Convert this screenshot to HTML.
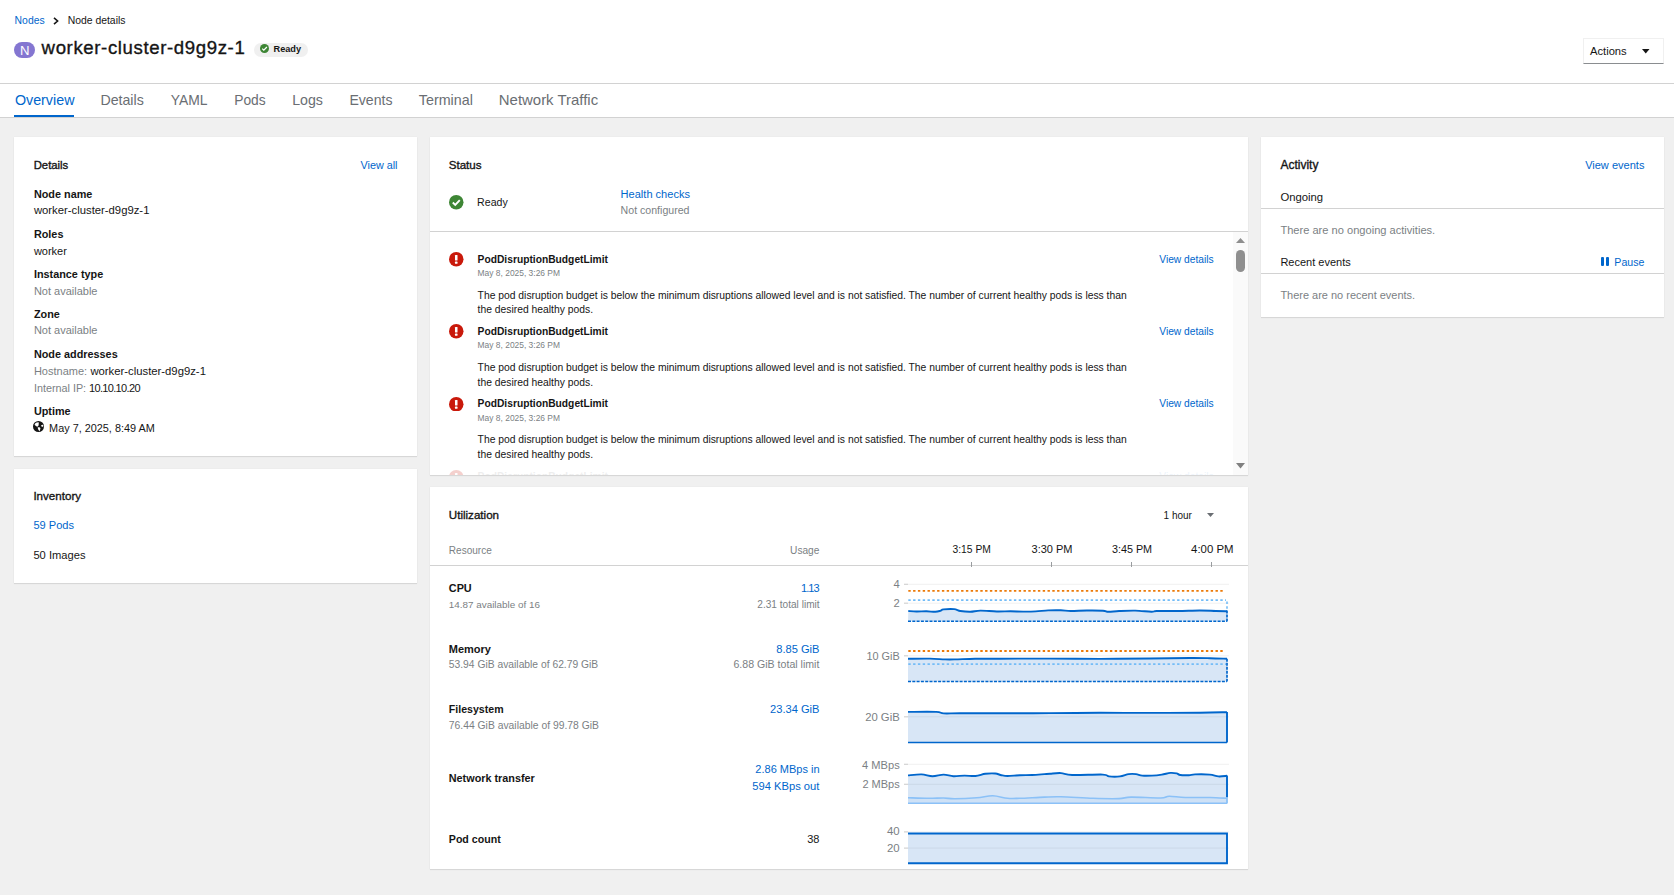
<!DOCTYPE html>
<html><head><meta charset="utf-8"><style>
html,body{margin:0;padding:0;width:1674px;height:895px;overflow:hidden;background:#fff;position:relative;font-family:"Liberation Sans",sans-serif;color:#151515}
.t{position:absolute;white-space:nowrap;line-height:1}
</style></head><body>
<div style="position:absolute;left:0px;top:0px;width:1674px;height:83px;background:#fff"></div>
<div style="position:absolute;left:0px;top:83px;width:1674px;height:1px;background:#d2d2d2"></div>
<div style="position:absolute;left:0px;top:84px;width:1674px;height:33px;background:#fff"></div>
<div style="position:absolute;left:0px;top:117px;width:1674px;height:1px;background:#d2d2d2"></div>
<div style="position:absolute;left:0px;top:118px;width:1674px;height:777px;background:#f0f0f0"></div>
<div class="t" style="top:16.40px;font-size:10.4px;color:#0066cc;left:14.6px;">Nodes</div>
<svg style="position:absolute;left:53px;top:17px" width="6" height="8" viewBox="0 0 6 8"><path d="M1 0.8 L4.6 4 L1 7.2" fill="none" stroke="#151515" stroke-width="1.6"/></svg>
<div class="t" style="top:16.40px;font-size:10.4px;left:67.7px;">Node details</div>
<div style="position:absolute;left:14px;top:42px;width:21px;height:16px;background:#8476d1;border-radius:8px"></div>
<div class="t" style="top:44.87px;font-size:12.2px;color:#fff;left:20.0px;transform:scaleX(1.08);transform-origin:left">N</div>
<div class="t" style="top:39.16px;font-size:18.6px;left:41.6px;-webkit-text-stroke:0.35px #151515;letter-spacing:0.62px">worker-cluster-d9g9z-1</div>
<div style="position:absolute;left:254px;top:43px;width:54px;height:14px;background:#f0f0f0;border-radius:7px"></div>
<svg style="position:absolute;left:260px;top:44px" width="9" height="9" viewBox="0 0 9 9"><circle cx="4.5" cy="4.5" r="4.5" fill="#3e8635"/><path d="M2.2 4.6 L3.8 6.1 L6.9 3" fill="none" stroke="#fff" stroke-width="1.3"/></svg>
<div class="t" style="top:44.91px;font-size:9.2px;font-weight:700;left:273.5px;">Ready</div>
<div style="position:absolute;left:1583px;top:38px;width:81px;height:26px;background:#fff;border:1px solid #f0f0f0;border-bottom:1px solid #8a8d90;box-sizing:border-box"></div>
<div class="t" style="top:46.32px;font-size:11.2px;left:1590px;">Actions</div>
<svg style="position:absolute;left:1642px;top:49.3px" width="8" height="5" viewBox="0 0 8 5"><path d="M0 0 L7.5 0 L3.75 4.5 Z" fill="#151515"/></svg>
<div class="t" style="top:92.80px;font-size:14.3px;color:#0066cc;left:14.9px;">Overview</div>
<div class="t" style="top:92.88px;font-size:14.2px;color:#6a6e73;left:100.4px;">Details</div>
<div class="t" style="top:93.93px;font-size:13.9px;color:#6a6e73;left:170.7px;">YAML</div>
<div class="t" style="top:94.02px;font-size:13.8px;color:#6a6e73;left:234.2px;">Pods</div>
<div class="t" style="top:92.88px;font-size:14.2px;color:#6a6e73;left:292.2px;">Logs</div>
<div class="t" style="top:92.96px;font-size:14.1px;color:#6a6e73;left:349.4px;">Events</div>
<div class="t" style="top:92.80px;font-size:14.3px;color:#6a6e73;left:418.8px;">Terminal</div>
<div class="t" style="top:93.04px;font-size:14.95px;color:#6a6e73;left:498.8px;">Network Traffic</div>
<div style="position:absolute;left:14px;top:115px;width:60px;height:2px;background:#0066cc"></div>
<div style="position:absolute;left:14px;top:137px;width:403px;height:319px;background:#fff;box-shadow:0 1px 1px 0 rgba(3,3,3,0.09),0 0 1px 0 rgba(3,3,3,0.07)"></div>
<div style="position:absolute;left:14px;top:469px;width:403px;height:114px;background:#fff;box-shadow:0 1px 1px 0 rgba(3,3,3,0.09),0 0 1px 0 rgba(3,3,3,0.07)"></div>
<div style="position:absolute;left:430px;top:137px;width:818px;height:338px;background:#fff;box-shadow:0 1px 1px 0 rgba(3,3,3,0.09),0 0 1px 0 rgba(3,3,3,0.07)"></div>
<div style="position:absolute;left:430px;top:487px;width:818px;height:382px;background:#fff;box-shadow:0 1px 1px 0 rgba(3,3,3,0.09),0 0 1px 0 rgba(3,3,3,0.07)"></div>
<div style="position:absolute;left:1261px;top:137px;width:403px;height:180px;background:#fff;box-shadow:0 1px 1px 0 rgba(3,3,3,0.09),0 0 1px 0 rgba(3,3,3,0.07)"></div>
<div class="t" style="top:160.13px;font-size:11.3px;left:33.7px;-webkit-text-stroke:0.35px #151515">Details</div>
<div class="t" style="top:160.36px;font-size:10.8px;color:#0066cc;right:1276.50px;text-align:right;">View all</div>
<div class="t" style="top:188.82px;font-size:10.85px;font-weight:700;left:33.9px;">Node name</div>
<div class="t" style="top:205.33px;font-size:11.3px;left:33.9px;">worker-cluster-d9g9z-1</div>
<div class="t" style="top:228.82px;font-size:10.85px;font-weight:700;left:33.9px;">Roles</div>
<div class="t" style="top:245.59px;font-size:11.0px;left:33.9px;">worker</div>
<div class="t" style="top:268.92px;font-size:10.85px;font-weight:700;left:33.9px;">Instance type</div>
<div class="t" style="top:285.69px;font-size:11.0px;color:#7b7f84;left:33.9px;">Not available</div>
<div class="t" style="top:308.72px;font-size:10.85px;font-weight:700;left:33.9px;">Zone</div>
<div class="t" style="top:325.49px;font-size:11.0px;color:#7b7f84;left:33.9px;">Not available</div>
<div class="t" style="top:349.02px;font-size:10.85px;font-weight:700;left:33.9px;">Node addresses</div>
<div class="t" style="top:365.79px;font-size:11.0px;color:#7b7f84;left:33.9px;">Hostname:</div>
<div class="t" style="top:365.53px;font-size:11.3px;left:90.4px;">worker-cluster-d9g9z-1</div>
<div class="t" style="top:382.76px;font-size:10.8px;color:#7b7f84;left:33.9px;">Internal IP:</div>
<div class="t" style="top:382.59px;font-size:11.0px;left:89.0px;letter-spacing:-0.66px">10.10.10.20</div>
<div class="t" style="top:405.72px;font-size:10.85px;font-weight:700;left:33.9px;">Uptime</div>
<svg style="position:absolute;left:33.1px;top:421px" width="11" height="11" viewBox="0 0 16 16"><circle cx="8" cy="8" r="8" fill="#151515"/><path d="M2.3 5.6 C2.8 3.8 4 2.7 5.5 2.2 L8.3 1.7 C8.5 3.5 8.3 5.2 8.1 6.6 C7.4 7.4 6.8 8 6.1 8.2 C5.2 7.8 4.4 7.6 3.9 7 C3.2 6.6 2.6 6.2 2.3 5.6 Z" fill="#fff"/><path d="M6.8 9.3 C7.9 9.1 9.2 9.2 10.1 9.5 C10.9 10.2 10.9 11.2 10.4 12.2 C10.1 13.1 9.9 14 9.6 14.8 C8.9 14.3 8.3 13.5 7.8 12.7 C7.4 11.6 7 10.5 6.8 9.3 Z" fill="#fff"/><path d="M11.8 6.3 C12.6 5.7 13.8 5.4 14.7 5.6 C15 6.6 15 7.6 14.8 8.4 C13.9 8.5 13 8.3 12.4 8 C12 7.5 11.8 6.9 11.8 6.3 Z" fill="#fff"/></svg>
<div class="t" style="top:422.80px;font-size:10.87px;left:49.1px;">May 7, 2025, 8:49 AM</div>
<div class="t" style="top:490.48px;font-size:11.6px;left:33.4px;-webkit-text-stroke:0.35px #151515">Inventory</div>
<div class="t" style="top:520.23px;font-size:11.07px;color:#0066cc;left:33.4px;">59 Pods</div>
<div class="t" style="top:550.25px;font-size:11.16px;left:33.4px;">50 Images</div>
<div class="t" style="top:158.74px;font-size:12.0px;left:1280.4px;-webkit-text-stroke:0.35px #151515">Activity</div>
<div class="t" style="top:159.95px;font-size:11.04px;color:#0066cc;right:29.60px;text-align:right;">View events</div>
<div class="t" style="top:191.83px;font-size:11.3px;left:1280.4px;">Ongoing</div>
<div style="position:absolute;left:1261px;top:208px;width:403px;height:1px;background:#d2d2d2"></div>
<div class="t" style="top:225.00px;font-size:11.1px;color:#7b7f84;left:1280.4px;">There are no ongoing activities.</div>
<div class="t" style="top:257.49px;font-size:11.0px;left:1280.4px;">Recent events</div>
<div style="position:absolute;left:1600.8px;top:256.8px;width:3.6px;height:9.2px;background:#0066cc;border-radius:1px"></div>
<div style="position:absolute;left:1605.9px;top:256.8px;width:3.6px;height:9.2px;background:#0066cc;border-radius:1px"></div>
<div class="t" style="top:257.03px;font-size:10.6px;color:#0066cc;right:29.60px;text-align:right;">Pause</div>
<div style="position:absolute;left:1261px;top:273px;width:403px;height:1px;background:#d2d2d2"></div>
<div class="t" style="top:289.91px;font-size:10.97px;color:#7b7f84;left:1280.4px;">There are no recent events.</div>
<div class="t" style="top:158.88px;font-size:11.6px;left:448.7px;-webkit-text-stroke:0.35px #151515">Status</div>
<svg style="position:absolute;left:449.2px;top:195px" width="14.5" height="14.5" viewBox="0 0 16 16"><circle cx="8" cy="8" r="8" fill="#3e8635"/><path d="M4.2 8.3 L6.9 10.9 L11.9 5.6" fill="none" stroke="#fff" stroke-width="2.1"/></svg>
<div class="t" style="top:197.03px;font-size:10.6px;left:477.1px;">Ready</div>
<div class="t" style="top:188.65px;font-size:11.05px;color:#0066cc;left:620.6px;">Health checks</div>
<div class="t" style="top:204.93px;font-size:10.6px;color:#7b7f84;left:620.6px;">Not configured</div>
<div style="position:absolute;left:430px;top:231px;width:818px;height:1px;background:#d2d2d2"></div>
<svg style="position:absolute;left:449.2px;top:252.00px;opacity:1" width="14.5" height="14.5" viewBox="0 0 16 16"><circle cx="8" cy="8" r="8" fill="#c9190b"/><rect x="6.6" y="3.3" width="2.8" height="6" rx="0.6" fill="#fff"/><rect x="6.6" y="10.6" width="2.8" height="2.4" rx="0.6" fill="#fff"/></svg>
<div class="t" style="top:254.71px;font-size:10.26px;font-weight:700;left:477.6px;">PodDisruptionBudgetLimit</div>
<div class="t" style="top:268.86px;font-size:8.43px;color:#7b7f84;left:477.6px;">May 8, 2025, 3:26 PM</div>
<div class="t" style="top:290.75px;font-size:10.34px;left:477.6px;">The pod disruption budget is below the minimum disruptions allowed level and is not satisfied. The number of current healthy pods is less than</div>
<div class="t" style="top:305.45px;font-size:10.34px;left:477.6px;">the desired healthy pods.</div>
<div class="t" style="top:254.64px;font-size:10.23px;color:#0066cc;right:460.40px;text-align:right;">View details</div>
<svg style="position:absolute;left:449.2px;top:324.35px;opacity:1" width="14.5" height="14.5" viewBox="0 0 16 16"><circle cx="8" cy="8" r="8" fill="#c9190b"/><rect x="6.6" y="3.3" width="2.8" height="6" rx="0.6" fill="#fff"/><rect x="6.6" y="10.6" width="2.8" height="2.4" rx="0.6" fill="#fff"/></svg>
<div class="t" style="top:327.06px;font-size:10.26px;font-weight:700;left:477.6px;">PodDisruptionBudgetLimit</div>
<div class="t" style="top:341.21px;font-size:8.43px;color:#7b7f84;left:477.6px;">May 8, 2025, 3:26 PM</div>
<div class="t" style="top:363.10px;font-size:10.34px;left:477.6px;">The pod disruption budget is below the minimum disruptions allowed level and is not satisfied. The number of current healthy pods is less than</div>
<div class="t" style="top:377.80px;font-size:10.34px;left:477.6px;">the desired healthy pods.</div>
<div class="t" style="top:326.99px;font-size:10.23px;color:#0066cc;right:460.40px;text-align:right;">View details</div>
<svg style="position:absolute;left:449.2px;top:396.70px;opacity:1" width="14.5" height="14.5" viewBox="0 0 16 16"><circle cx="8" cy="8" r="8" fill="#c9190b"/><rect x="6.6" y="3.3" width="2.8" height="6" rx="0.6" fill="#fff"/><rect x="6.6" y="10.6" width="2.8" height="2.4" rx="0.6" fill="#fff"/></svg>
<div class="t" style="top:399.41px;font-size:10.26px;font-weight:700;left:477.6px;">PodDisruptionBudgetLimit</div>
<div class="t" style="top:413.56px;font-size:8.43px;color:#7b7f84;left:477.6px;">May 8, 2025, 3:26 PM</div>
<div class="t" style="top:435.45px;font-size:10.34px;left:477.6px;">The pod disruption budget is below the minimum disruptions allowed level and is not satisfied. The number of current healthy pods is less than</div>
<div class="t" style="top:450.15px;font-size:10.34px;left:477.6px;">the desired healthy pods.</div>
<div class="t" style="top:399.34px;font-size:10.23px;color:#0066cc;right:460.40px;text-align:right;">View details</div>
<div style="position:absolute;left:430px;top:468px;width:802px;height:7px;overflow:hidden"><svg style="position:absolute;left:19.2px;top:2px;opacity:0.2" width="14.5" height="14.5" viewBox="0 0 16 16"><circle cx="8" cy="8" r="8" fill="#c9190b"/><rect x="6.6" y="3.3" width="2.8" height="6" rx="0.6" fill="#fff"/><rect x="6.6" y="10.6" width="2.8" height="2.4" rx="0.6" fill="#fff"/></svg><div class="t" style="left:47.6px;top:3.76px;font-size:10.26px;font-weight:700;opacity:0.07">PodDisruptionBudgetLimit</div><div class="t" style="right:18.4px;top:3.69px;font-size:10.23px;color:#0066cc;opacity:0.07">View details</div></div>
<div style="position:absolute;left:1233px;top:232px;width:15px;height:243px;background:#fafafa"></div>
<svg style="position:absolute;left:1236px;top:237.5px" width="9" height="6" viewBox="0 0 9 6"><path d="M0 5 L9 5 L4.5 0 Z" fill="#8e8e8e"/></svg>
<div style="position:absolute;left:1236px;top:250px;width:9px;height:22px;background:#8f8f8f;border-radius:4.5px"></div>
<svg style="position:absolute;left:1236px;top:462.5px" width="9" height="6" viewBox="0 0 9 6"><path d="M0 0 L9 0 L4.5 5.5 Z" fill="#808080"/></svg>
<div class="t" style="top:508.68px;font-size:11.6px;left:448.8px;-webkit-text-stroke:0.35px #151515">Utilization</div>
<div class="t" style="top:510.74px;font-size:10.0px;left:1163.6px;">1 hour</div>
<svg style="position:absolute;left:1206.5px;top:513px" width="8" height="5" viewBox="0 0 8 5"><path d="M0 0 L7 0 L3.5 4 Z" fill="#6a6e73"/></svg>
<div class="t" style="top:545.99px;font-size:10.05px;color:#7b7f84;left:448.8px;">Resource</div>
<div class="t" style="top:545.89px;font-size:10.17px;color:#7b7f84;right:854.60px;text-align:right;">Usage</div>
<div style="position:absolute;left:430px;top:565px;width:818px;height:1px;background:#d2d2d2"></div>
<div class="t" style="top:545.28px;font-size:10.3px;left:821.70px;width:300px;text-align:center;">3:15 PM</div>
<div class="t" style="top:544.19px;font-size:11.0px;left:902.00px;width:300px;text-align:center;">3:30 PM</div>
<div class="t" style="top:544.36px;font-size:10.8px;left:982.00px;width:300px;text-align:center;">3:45 PM</div>
<div class="t" style="top:544.35px;font-size:11.4px;left:1062.30px;width:300px;text-align:center;">4:00 PM</div>
<div style="position:absolute;left:971px;top:562px;width:1px;height:5px;background:#9a9da0"></div>
<div style="position:absolute;left:1051px;top:562px;width:1px;height:5px;background:#9a9da0"></div>
<div style="position:absolute;left:1131px;top:562px;width:1px;height:5px;background:#9a9da0"></div>
<div style="position:absolute;left:1211px;top:562px;width:1px;height:5px;background:#9a9da0"></div>
<div class="t" style="top:582.92px;font-size:10.85px;font-weight:700;left:448.8px;">CPU</div>
<div class="t" style="top:582.79px;font-size:11.0px;color:#0066cc;right:855.20px;text-align:right;letter-spacing:-0.9px">1.13</div>
<div class="t" style="top:599.62px;font-size:9.9px;color:#7b7f84;left:448.8px;">14.87 available of 16</div>
<div class="t" style="top:600.45px;font-size:10.1px;color:#7b7f84;right:854.40px;text-align:right;">2.31 total limit</div>
<div class="t" style="top:643.79px;font-size:11.0px;font-weight:700;left:448.8px;">Memory</div>
<div class="t" style="top:643.70px;font-size:11.1px;color:#0066cc;right:854.60px;text-align:right;">8.85 GiB</div>
<div class="t" style="top:659.88px;font-size:10.3px;color:#7b7f84;left:448.8px;">53.94 GiB available of 62.79 GiB</div>
<div class="t" style="top:658.83px;font-size:10.6px;color:#7b7f84;right:854.60px;text-align:right;">6.88 GiB total limit</div>
<div class="t" style="top:704.13px;font-size:10.6px;font-weight:700;left:448.8px;">Filesystem</div>
<div class="t" style="top:703.70px;font-size:11.1px;color:#0066cc;right:854.60px;text-align:right;">23.34 GiB</div>
<div class="t" style="top:720.64px;font-size:10.35px;color:#7b7f84;left:448.8px;">76.44 GiB available of 99.78 GiB</div>
<div class="t" style="top:772.94px;font-size:10.82px;font-weight:700;left:448.8px;">Network transfer</div>
<div class="t" style="top:763.96px;font-size:11.03px;color:#0066cc;right:854.40px;text-align:right;">2.86 MBps in</div>
<div class="t" style="top:780.92px;font-size:11.2px;color:#0066cc;right:854.60px;text-align:right;">594 KBps out</div>
<div class="t" style="top:833.99px;font-size:10.64px;font-weight:700;left:448.8px;">Pod count</div>
<div class="t" style="top:833.69px;font-size:11.0px;right:854.60px;text-align:right;">38</div>
<div class="t" style="top:578.62px;font-size:11.2px;color:#7b7f84;right:774.30px;text-align:right;">4</div>
<div class="t" style="top:597.72px;font-size:11.2px;color:#7b7f84;right:774.30px;text-align:right;">2</div>
<div class="t" style="top:650.67px;font-size:10.9px;color:#7b7f84;right:774.30px;text-align:right;">10 GiB</div>
<div class="t" style="top:711.73px;font-size:11.3px;color:#7b7f84;right:774.30px;text-align:right;">20 GiB</div>
<div class="t" style="top:759.60px;font-size:11.1px;color:#7b7f84;right:774.30px;text-align:right;">4 MBps</div>
<div class="t" style="top:778.79px;font-size:11.0px;color:#7b7f84;right:774.30px;text-align:right;">2 MBps</div>
<div class="t" style="top:826.45px;font-size:11.4px;color:#7b7f84;right:774.30px;text-align:right;">40</div>
<div class="t" style="top:842.55px;font-size:11.4px;color:#7b7f84;right:774.30px;text-align:right;">20</div>
<svg style="position:absolute;left:0;top:0" width="1674" height="895" viewBox="0 0 1674 895">
<path d="M908.30 611.00 C909.67 611.08 913.47 611.45 916.50 611.50 C919.53 611.55 923.37 611.25 926.50 611.30 C929.63 611.35 933.00 611.88 935.30 611.80 C937.60 611.72 938.93 611.20 940.30 610.80 C941.67 610.40 941.20 609.68 943.50 609.40 C945.80 609.12 951.28 608.83 954.10 609.10 C956.92 609.37 957.68 610.55 960.40 611.00 C963.12 611.45 967.05 611.87 970.40 611.80 C973.75 611.73 976.10 610.65 980.50 610.60 C984.90 610.55 991.78 611.38 996.80 611.50 C1001.82 611.62 1006.22 611.28 1010.60 611.30 C1014.98 611.32 1018.92 611.58 1023.10 611.60 C1027.28 611.62 1031.52 611.60 1035.70 611.40 C1039.88 611.20 1044.02 610.58 1048.20 610.40 C1052.38 610.22 1057.03 610.20 1060.80 610.30 C1064.57 610.40 1066.45 610.97 1070.80 611.00 C1075.15 611.03 1081.53 610.55 1086.90 610.50 C1092.27 610.45 1099.42 610.48 1103.00 610.70 C1106.58 610.92 1105.72 611.75 1108.40 611.80 C1111.08 611.85 1114.62 611.20 1119.10 611.00 C1123.58 610.80 1129.92 610.47 1135.30 610.60 C1140.68 610.73 1147.82 611.73 1151.40 611.80 C1154.98 611.87 1152.32 611.13 1156.80 611.00 C1161.28 610.87 1171.13 611.08 1178.30 611.00 C1185.47 610.92 1193.53 610.50 1199.80 610.50 C1206.07 610.50 1211.37 610.88 1215.90 611.00 C1220.43 611.12 1225.15 611.17 1227.00 611.20 L1227 621.3 L908 621.3 Z" fill="#d8e6f6"/>
<line x1="908" y1="584.3" x2="1229" y2="584.3" stroke="#000" stroke-opacity="0.06" stroke-width="1"/>
<line x1="904" y1="584.3" x2="908" y2="584.3" stroke="#d2d2d2" stroke-width="1.2"/>
<line x1="908" y1="603.2" x2="1229" y2="603.2" stroke="#000" stroke-opacity="0.06" stroke-width="1"/>
<line x1="904" y1="603.2" x2="908" y2="603.2" stroke="#d2d2d2" stroke-width="1.2"/>
<path d="M908.30 611.00 C909.67 611.08 913.47 611.45 916.50 611.50 C919.53 611.55 923.37 611.25 926.50 611.30 C929.63 611.35 933.00 611.88 935.30 611.80 C937.60 611.72 938.93 611.20 940.30 610.80 C941.67 610.40 941.20 609.68 943.50 609.40 C945.80 609.12 951.28 608.83 954.10 609.10 C956.92 609.37 957.68 610.55 960.40 611.00 C963.12 611.45 967.05 611.87 970.40 611.80 C973.75 611.73 976.10 610.65 980.50 610.60 C984.90 610.55 991.78 611.38 996.80 611.50 C1001.82 611.62 1006.22 611.28 1010.60 611.30 C1014.98 611.32 1018.92 611.58 1023.10 611.60 C1027.28 611.62 1031.52 611.60 1035.70 611.40 C1039.88 611.20 1044.02 610.58 1048.20 610.40 C1052.38 610.22 1057.03 610.20 1060.80 610.30 C1064.57 610.40 1066.45 610.97 1070.80 611.00 C1075.15 611.03 1081.53 610.55 1086.90 610.50 C1092.27 610.45 1099.42 610.48 1103.00 610.70 C1106.58 610.92 1105.72 611.75 1108.40 611.80 C1111.08 611.85 1114.62 611.20 1119.10 611.00 C1123.58 610.80 1129.92 610.47 1135.30 610.60 C1140.68 610.73 1147.82 611.73 1151.40 611.80 C1154.98 611.87 1152.32 611.13 1156.80 611.00 C1161.28 610.87 1171.13 611.08 1178.30 611.00 C1185.47 610.92 1193.53 610.50 1199.80 610.50 C1206.07 610.50 1211.37 610.88 1215.90 611.00 C1220.43 611.12 1225.15 611.17 1227.00 611.20" fill="none" stroke="#0066cc" stroke-width="1.9"/>
<line x1="908" y1="621.3" x2="1227" y2="621.3" stroke="#0066cc" stroke-width="1.5" stroke-dasharray="3 1.3"/>
<line x1="1227" y1="610.5" x2="1227" y2="621.5" stroke="#0066cc" stroke-width="1.7" stroke-dasharray="3 1"/>
<line x1="908.3" y1="590.9" x2="1225" y2="590.9" stroke="#ec7a08" stroke-width="1.8" stroke-dasharray="2.4 2.4"/>
<line x1="908.3" y1="600.1" x2="1226" y2="600.1" stroke="#73bcf7" stroke-width="1.8" stroke-dasharray="2.4 2.4"/>
<line x1="1227" y1="601.5" x2="1227" y2="610" stroke="#73bcf7" stroke-width="1.6" stroke-dasharray="2.4 2.4"/>
<path d="M908.00 658.80 C911.67 658.77 923.83 658.50 930.00 658.60 C936.17 658.70 940.83 659.27 945.00 659.40 C949.17 659.53 950.00 659.50 955.00 659.40 C960.00 659.30 967.50 658.92 975.00 658.80 C982.50 658.68 987.50 658.73 1000.00 658.70 C1012.50 658.67 1033.33 658.57 1050.00 658.60 C1066.67 658.63 1083.33 658.92 1100.00 658.90 C1116.67 658.88 1135.00 658.65 1150.00 658.50 C1165.00 658.35 1180.00 658.05 1190.00 658.00 C1200.00 657.95 1203.83 658.08 1210.00 658.20 C1216.17 658.32 1224.17 658.62 1227.00 658.70 L1227 681.4 L908 681.4 Z" fill="#d8e6f6"/>
<line x1="908" y1="655.8" x2="1229" y2="655.8" stroke="#000" stroke-opacity="0.06" stroke-width="1"/>
<line x1="904" y1="655.8" x2="908" y2="655.8" stroke="#d2d2d2" stroke-width="1.2"/>
<path d="M908.00 658.80 C911.67 658.77 923.83 658.50 930.00 658.60 C936.17 658.70 940.83 659.27 945.00 659.40 C949.17 659.53 950.00 659.50 955.00 659.40 C960.00 659.30 967.50 658.92 975.00 658.80 C982.50 658.68 987.50 658.73 1000.00 658.70 C1012.50 658.67 1033.33 658.57 1050.00 658.60 C1066.67 658.63 1083.33 658.92 1100.00 658.90 C1116.67 658.88 1135.00 658.65 1150.00 658.50 C1165.00 658.35 1180.00 658.05 1190.00 658.00 C1200.00 657.95 1203.83 658.08 1210.00 658.20 C1216.17 658.32 1224.17 658.62 1227.00 658.70" fill="none" stroke="#0066cc" stroke-width="1.9"/>
<line x1="908" y1="681.4" x2="1227" y2="681.4" stroke="#0066cc" stroke-width="1.5" stroke-dasharray="3 1.3"/>
<line x1="1227" y1="658.7" x2="1227" y2="681.5" stroke="#0066cc" stroke-width="1.7" stroke-dasharray="3 1"/>
<line x1="908.3" y1="651" x2="1225" y2="651" stroke="#ec7a08" stroke-width="1.8" stroke-dasharray="2.4 2.4"/>
<line x1="908.3" y1="664.1" x2="1226" y2="664.1" stroke="#73bcf7" stroke-width="1.8" stroke-dasharray="2.4 2.4"/>
<path d="M908.00 711.90 C912.70 711.90 930.27 711.65 936.20 711.90 C942.13 712.15 939.63 713.17 943.60 713.40 C947.57 713.63 950.60 713.32 960.00 713.30 C969.40 713.28 985.00 713.33 1000.00 713.30 C1015.00 713.27 1033.33 713.18 1050.00 713.10 C1066.67 713.02 1083.33 712.83 1100.00 712.80 C1116.67 712.77 1133.33 712.92 1150.00 712.90 C1166.67 712.88 1187.17 712.82 1200.00 712.70 C1212.83 712.58 1222.50 712.28 1227.00 712.20 L1227 742.4 L908 742.4 Z" fill="#d8e6f6"/>
<line x1="908" y1="716.8" x2="1229" y2="716.8" stroke="#000" stroke-opacity="0.06" stroke-width="1"/>
<line x1="904" y1="716.8" x2="908" y2="716.8" stroke="#d2d2d2" stroke-width="1.2"/>
<path d="M908.00 711.90 C912.70 711.90 930.27 711.65 936.20 711.90 C942.13 712.15 939.63 713.17 943.60 713.40 C947.57 713.63 950.60 713.32 960.00 713.30 C969.40 713.28 985.00 713.33 1000.00 713.30 C1015.00 713.27 1033.33 713.18 1050.00 713.10 C1066.67 713.02 1083.33 712.83 1100.00 712.80 C1116.67 712.77 1133.33 712.92 1150.00 712.90 C1166.67 712.88 1187.17 712.82 1200.00 712.70 C1212.83 712.58 1222.50 712.28 1227.00 712.20" fill="none" stroke="#0066cc" stroke-width="1.9"/>
<line x1="908" y1="742.5" x2="1227" y2="742.5" stroke="#0066cc" stroke-width="1.3"/>
<line x1="1227" y1="712" x2="1227" y2="742.6" stroke="#0066cc" stroke-width="1.9"/>
<path d="M908.00 775.40 C910.25 775.23 917.42 774.27 921.50 774.40 C925.58 774.53 928.82 776.17 932.50 776.20 C936.18 776.23 940.12 774.60 943.60 774.60 C947.08 774.60 949.92 776.03 953.40 776.20 C956.88 776.37 960.82 775.63 964.50 775.60 C968.18 775.57 972.02 776.30 975.50 776.00 C978.98 775.70 982.12 774.22 985.40 773.80 C988.68 773.38 992.53 773.27 995.20 773.50 C997.87 773.73 999.35 774.78 1001.40 775.20 C1003.45 775.62 1004.43 776.00 1007.50 776.00 C1010.57 776.00 1015.70 775.37 1019.80 775.20 C1023.90 775.03 1028.00 775.18 1032.10 775.00 C1036.20 774.82 1041.42 774.32 1044.40 774.10 C1047.38 773.88 1047.23 773.87 1050.00 773.70 C1052.77 773.53 1057.32 772.88 1061.00 773.10 C1064.68 773.32 1065.13 774.75 1072.10 775.00 C1079.07 775.25 1096.65 774.37 1102.80 774.60 C1108.95 774.83 1106.13 776.10 1109.00 776.40 C1111.87 776.70 1116.72 776.78 1120.00 776.40 C1123.28 776.02 1126.03 774.48 1128.70 774.10 C1131.37 773.72 1133.75 773.85 1136.00 774.10 C1138.25 774.35 1139.53 775.35 1142.20 775.60 C1144.87 775.85 1148.73 775.77 1152.00 775.60 C1155.27 775.43 1158.73 775.05 1161.80 774.60 C1164.87 774.15 1167.93 773.10 1170.40 772.90 C1172.87 772.70 1174.95 773.05 1176.60 773.40 C1178.25 773.75 1178.25 774.70 1180.30 775.00 C1182.35 775.30 1186.45 775.30 1188.90 775.20 C1191.35 775.10 1191.52 774.50 1195.00 774.40 C1198.48 774.30 1205.90 774.27 1209.80 774.60 C1213.70 774.93 1215.53 776.20 1218.40 776.40 C1221.27 776.60 1225.57 775.90 1227.00 775.80 L1227 803.2 L908 803.2 Z" fill="#d8e6f6"/>
<path d="M908.00 797.70 C911.47 797.80 922.87 798.25 928.80 798.30 C934.73 798.35 939.28 797.93 943.60 798.00 C947.92 798.07 949.17 798.75 954.70 798.70 C960.23 798.65 970.45 798.18 976.80 797.70 C983.15 797.22 987.68 795.70 992.80 795.80 C997.92 795.90 1003.00 797.88 1007.50 798.30 C1012.00 798.72 1013.65 798.50 1019.80 798.30 C1025.95 798.10 1037.53 797.35 1044.40 797.10 C1051.27 796.85 1052.90 796.60 1061.00 796.80 C1069.10 797.00 1083.37 798.00 1093.00 798.30 C1102.63 798.60 1112.45 798.80 1118.80 798.60 C1125.15 798.40 1124.13 797.20 1131.10 797.10 C1138.07 797.00 1154.25 798.15 1160.60 798.00 C1166.95 797.85 1165.10 796.28 1169.20 796.20 C1173.30 796.12 1178.43 797.28 1185.20 797.50 C1191.97 797.72 1202.83 797.37 1209.80 797.50 C1216.77 797.63 1224.13 798.17 1227.00 798.30 L1227 803.2 L908 803.2 Z" fill="#8bc1f7" fill-opacity="0.12"/>
<line x1="908" y1="764.3" x2="1229" y2="764.3" stroke="#000" stroke-opacity="0.06" stroke-width="1"/>
<line x1="904" y1="764.3" x2="908" y2="764.3" stroke="#d2d2d2" stroke-width="1.2"/>
<line x1="908" y1="784.3" x2="1229" y2="784.3" stroke="#000" stroke-opacity="0.06" stroke-width="1"/>
<line x1="904" y1="784.3" x2="908" y2="784.3" stroke="#d2d2d2" stroke-width="1.2"/>
<path d="M908.00 775.40 C910.25 775.23 917.42 774.27 921.50 774.40 C925.58 774.53 928.82 776.17 932.50 776.20 C936.18 776.23 940.12 774.60 943.60 774.60 C947.08 774.60 949.92 776.03 953.40 776.20 C956.88 776.37 960.82 775.63 964.50 775.60 C968.18 775.57 972.02 776.30 975.50 776.00 C978.98 775.70 982.12 774.22 985.40 773.80 C988.68 773.38 992.53 773.27 995.20 773.50 C997.87 773.73 999.35 774.78 1001.40 775.20 C1003.45 775.62 1004.43 776.00 1007.50 776.00 C1010.57 776.00 1015.70 775.37 1019.80 775.20 C1023.90 775.03 1028.00 775.18 1032.10 775.00 C1036.20 774.82 1041.42 774.32 1044.40 774.10 C1047.38 773.88 1047.23 773.87 1050.00 773.70 C1052.77 773.53 1057.32 772.88 1061.00 773.10 C1064.68 773.32 1065.13 774.75 1072.10 775.00 C1079.07 775.25 1096.65 774.37 1102.80 774.60 C1108.95 774.83 1106.13 776.10 1109.00 776.40 C1111.87 776.70 1116.72 776.78 1120.00 776.40 C1123.28 776.02 1126.03 774.48 1128.70 774.10 C1131.37 773.72 1133.75 773.85 1136.00 774.10 C1138.25 774.35 1139.53 775.35 1142.20 775.60 C1144.87 775.85 1148.73 775.77 1152.00 775.60 C1155.27 775.43 1158.73 775.05 1161.80 774.60 C1164.87 774.15 1167.93 773.10 1170.40 772.90 C1172.87 772.70 1174.95 773.05 1176.60 773.40 C1178.25 773.75 1178.25 774.70 1180.30 775.00 C1182.35 775.30 1186.45 775.30 1188.90 775.20 C1191.35 775.10 1191.52 774.50 1195.00 774.40 C1198.48 774.30 1205.90 774.27 1209.80 774.60 C1213.70 774.93 1215.53 776.20 1218.40 776.40 C1221.27 776.60 1225.57 775.90 1227.00 775.80" fill="none" stroke="#0066cc" stroke-width="1.9"/>
<line x1="1227" y1="775.5" x2="1227" y2="797.5" stroke="#0066cc" stroke-width="1.9"/>
<path d="M908.00 797.70 C911.47 797.80 922.87 798.25 928.80 798.30 C934.73 798.35 939.28 797.93 943.60 798.00 C947.92 798.07 949.17 798.75 954.70 798.70 C960.23 798.65 970.45 798.18 976.80 797.70 C983.15 797.22 987.68 795.70 992.80 795.80 C997.92 795.90 1003.00 797.88 1007.50 798.30 C1012.00 798.72 1013.65 798.50 1019.80 798.30 C1025.95 798.10 1037.53 797.35 1044.40 797.10 C1051.27 796.85 1052.90 796.60 1061.00 796.80 C1069.10 797.00 1083.37 798.00 1093.00 798.30 C1102.63 798.60 1112.45 798.80 1118.80 798.60 C1125.15 798.40 1124.13 797.20 1131.10 797.10 C1138.07 797.00 1154.25 798.15 1160.60 798.00 C1166.95 797.85 1165.10 796.28 1169.20 796.20 C1173.30 796.12 1178.43 797.28 1185.20 797.50 C1191.97 797.72 1202.83 797.37 1209.80 797.50 C1216.77 797.63 1224.13 798.17 1227.00 798.30" fill="none" stroke="#8bc1f7" stroke-width="1.6"/>
<line x1="1227" y1="797.5" x2="1227" y2="803.5" stroke="#8bc1f7" stroke-width="1.8"/>
<line x1="908" y1="803.2" x2="1227" y2="803.2" stroke="#8bc1f7" stroke-width="1.6"/>
<rect x="908" y="833.5" width="319" height="29.700000000000045" fill="#d8e6f6"/>
<line x1="908" y1="831.9" x2="1229" y2="831.9" stroke="#000" stroke-opacity="0.06" stroke-width="1"/>
<line x1="904" y1="831.9" x2="908" y2="831.9" stroke="#d2d2d2" stroke-width="1.2"/>
<line x1="908" y1="848.1" x2="1229" y2="848.1" stroke="#000" stroke-opacity="0.06" stroke-width="1"/>
<line x1="904" y1="848.1" x2="908" y2="848.1" stroke="#d2d2d2" stroke-width="1.2"/>
<path d="M908 833.5 L1227 833.5 L1227 863.2 L908 863.2" fill="none" stroke="#0066cc" stroke-width="1.9"/>
</svg>
</body></html>
